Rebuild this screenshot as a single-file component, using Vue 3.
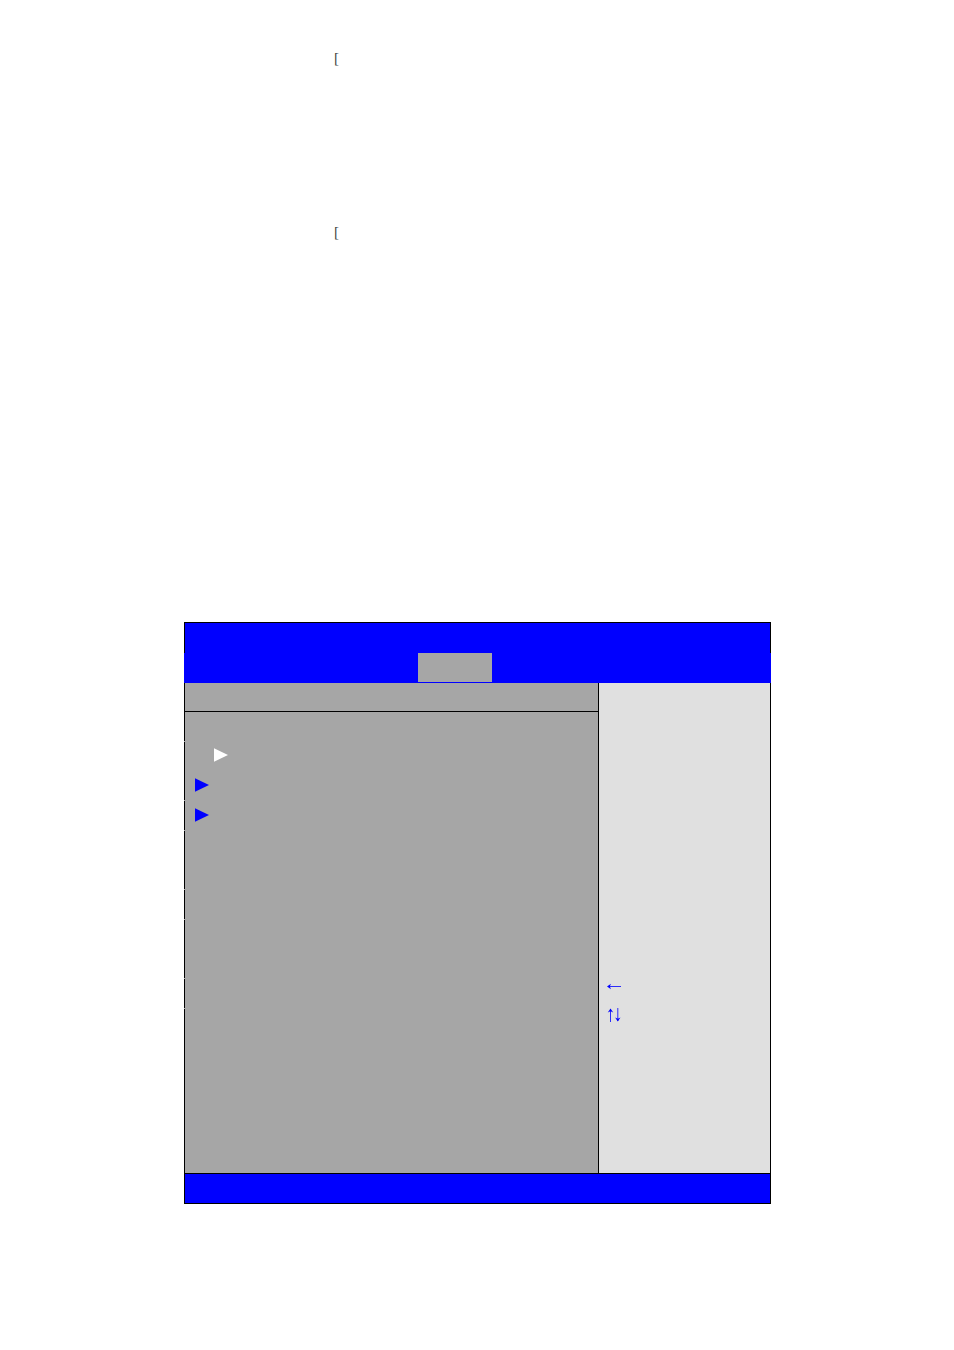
<script setup>
const notes = ['[', '['];

const rows = [
  {edgeGap: true},
  {marker: 'current'},
  {marker: 'submenu', edgeGap: true},
  {marker: 'submenu', edgeGap: true},
  {},
  {edgeGap: true},
  {edgeGap: true},
  {},
  {edgeGap: true},
  {edgeGap: true},
];
</script>

<template>
  <main class="page">
    <section class="notes">
      <p v-for="(note, index) in notes" :key="index" class="note">{{ note }}</p>
    </section>

    <section class="setup">
      <header class="title-bar"></header>
      <nav class="tab-bar">
        <div class="active-tab"></div>
      </nav>
      <div class="content">
        <div class="settings">
          <div class="settings-head"></div>
          <div v-for="(row, index) in rows" :key="index" :class="['row', {gapped: row.edgeGap}]">
            <span class="edge"></span>
            <svg v-if="row.marker" :class="['marker', row.marker]" viewBox="0 0 14 14">
              <path d="M0 0.3 L14 7 L0 13.7 Z"/>
            </svg>
          </div>
          <div class="row rest"><span class="edge"></span></div>
        </div>
        <aside class="help">
          <div class="keys">
            <svg class="key" viewBox="0 0 14 14" role="img" aria-label="Left">
              <path class="shaft" d="M1 7.5 H14"/>
              <path class="head" d="M0 7.5 L4 4.8 L2.8 7.5 L4 10.2 Z"/>
            </svg>
            <svg class="key" viewBox="0 0 14 14" role="img" aria-label="Up and down">
              <path class="shaft" d="M3.5 1 V14 M10.8 0 V13"/>
              <path class="head" d="M3.5 0.5 L6.2 4.5 L3.5 3.3 L0.8 4.5 Z"/>
              <path class="head" d="M10.8 13.5 L13.5 9.5 L10.8 10.7 L8.1 9.5 Z"/>
            </svg>
          </div>
        </aside>
      </div>
      <footer class="footer-bar"></footer>
    </section>
  </main>
</template>

<style>
body {
  margin: 0;
  background-color: white;
}
</style>

<style scoped>
.page {
  padding: 43px 183px 146px 184px;
  font-family: "Liberation Serif", serif;
}

.notes {
  display: flex;
  flex-direction: column;
  gap: 144px;
  min-height: 579px;
  padding-left: 150px;
  box-sizing: border-box;
}

.note {
  margin: 0;
  font-size: 15px;
  line-height: 30px;
  color: #444;
}

.title-bar {
  height: 30px;
  border: 1px solid black;
  border-bottom: none;
  background-color: #0000ff;
}

.tab-bar {
  display: flex;
  height: 30px;
  padding-left: 234px;
  background-color: #0000ff;
}

.active-tab {
  width: 74px;
  height: 29px;
  background-color: #a6a6a6;
}

.content {
  display: flex;
  min-height: 490px;
}

.settings {
  display: flex;
  flex: 414;
  flex-direction: column;
  background-color: #a6a6a6;
}

.settings-head {
  height: 28px;
  border-left: 1px solid black;
  border-bottom: 1px solid black;
}

.row {
  display: flex;
  height: 29px;
}

.gapped {
  padding-bottom: 1px;
}

.rest {
  flex: 1;
}

.edge {
  width: 1px;
  background-color: black;
}

.marker {
  width: 14px;
  height: 14px;
  margin: 7px 0 0 10px;
  fill: #0000ff;
}

.current {
  margin: 6px 0 0 29px;
  fill: white;
}

.help {
  flex: 171;
  border: solid black;
  border-width: 0 1px;
  background-color: #e0e0e0;
}

.keys {
  display: flex;
  flex-direction: column;
  gap: 15px;
  padding: 296px 8px 0;
}

.key {
  width: 14px;
  height: 14px;
}

.shaft {
  fill: none;
  stroke: #0000ff;
  stroke-width: 0.8;
}

.head {
  fill: #0000ff;
}

.footer-bar {
  height: 29px;
  border: 1px solid black;
  background-color: #0000ff;
}
</style>
